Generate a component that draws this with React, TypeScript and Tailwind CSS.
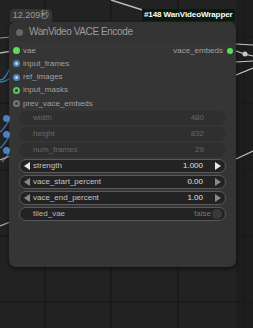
import React from 'react'

const INPUTS: { label: string; kind: 'green' | 'blueRing' | 'greenRing' | 'grayRing' }[] = [
  { label: 'vae', kind: 'green' },
  { label: 'input_frames', kind: 'blueRing' },
  { label: 'ref_images', kind: 'blueRing' },
  { label: 'input_masks', kind: 'greenRing' },
  { label: 'prev_vace_embeds', kind: 'grayRing' },
]

const DOT_CLASS: Record<string, string> = {
  green: 'bg-[#5cde5c]',
  blueRing: 'bg-[#c8d8ea] border-2 border-[#4c82c4]',
  greenRing: 'bg-[#2c3a2c] border-2 border-[#5cc75c]',
  grayRing: 'bg-[#3a3a3a] border-2 border-[#777]',
}

function Slot({ label, kind }: { label: string; kind: string }) {
  return (
    <div className="flex items-center h-[13.25px]">
      <span className={`w-[7px] h-[7px] rounded-full ml-[4px] ${DOT_CLASS[kind]}`} />
      <span className="ml-[3px] text-[8px] leading-none text-[#a0a0a0]">{label}</span>
    </div>
  )
}

function LinkedWidget({ label, value }: { label: string; value: string }) {
  return (
    <div className="relative h-[14px]">
      <span className="absolute left-[-6px] top-[3.5px] w-[7px] h-[7px] rounded-full bg-[#4a7fc0]" />
      <div className="ml-[10px] h-full rounded-full bg-[#2f2f2f] flex items-center justify-between pl-[14px] pr-[22px] text-[8px] text-[#676767]">
        <span>{label}</span>
        <span>{value}</span>
      </div>
    </div>
  )
}

function NumberWidget({ label, value, dim }: { label: string; value: string; dim?: boolean }) {
  return (
    <div className="ml-[10px] h-[14px] rounded-full bg-[#232323] border border-[#595959] flex items-center text-[8px]">
      <span className={`ml-[4px] w-0 h-0 border-y-[4px] border-y-transparent border-r-[6px] ${dim ? 'border-r-[#8a8a8a]' : 'border-r-[#e8e8e8]'}`} />
      <span className="ml-[3px] text-[#c4c4c4]">{label}</span>
      <span className="ml-auto text-[#e0e0e0]">{value}</span>
      <span className={`ml-[12px] mr-[4px] w-0 h-0 border-y-[4px] border-y-transparent border-l-[6px] ${dim ? 'border-l-[#8a8a8a]' : 'border-l-[#e8e8e8]'}`} />
    </div>
  )
}

export default function App() {
  return (
    <div className="relative w-[253px] h-[328px] overflow-hidden bg-[#222222]" style={{ fontFamily: '"Liberation Sans", Arial, sans-serif' }}>
      {/* canvas grid + wires */}
      <svg className="absolute inset-0" width="253" height="328" viewBox="0 0 253 328">
        <rect x="236" y="0" width="17" height="328" fill="#1d1d1d" />
        {[45, 111, 178, 244].map(x => <line key={x} x1={x} y1="0" x2={x} y2="328" stroke="#1a1a1a" strokeWidth="1.5" />)}
        {[37, 103, 170, 236, 302].map(y => <line key={y} x1="0" y1={y} x2="253" y2={y} stroke="#1a1a1a" strokeWidth="1.5" />)}
        <line x1="111" y1="0" x2="152" y2="13" stroke="#b8b8b8" strokeWidth="1.5" />
        <line x1="0" y1="38" x2="10" y2="37" stroke="#9a9a9a" strokeWidth="1.2" />
        <line x1="0" y1="53" x2="12" y2="51" stroke="#a9b4a9" strokeWidth="1.3" />
        <path d="M0 80 C 8 80, 8 64, 16 64" fill="none" stroke="#3f78b8" strokeWidth="1.3" />
        <path d="M0 82 C 8 82, 8 77, 16 77" fill="none" stroke="#3f78b8" strokeWidth="1.3" />
        <path d="M0 132 C 6 128, 8 118, 16 118" fill="none" stroke="#3f78b8" strokeWidth="1.3" />
        <path d="M0 148 C 6 144, 8 134, 16 134" fill="none" stroke="#3f78b8" strokeWidth="1.3" />
        <path d="M2 162 C 7 158, 9 149, 16 149" fill="none" stroke="#3f78b8" strokeWidth="1.3" />
        <line x1="0" y1="160" x2="10" y2="156" stroke="#a8b0a8" strokeWidth="1.2" />
        <line x1="0" y1="226" x2="10" y2="222" stroke="#a8b0a8" strokeWidth="1.2" />
        <line x1="236" y1="44" x2="253" y2="45" stroke="#c8c8c8" strokeWidth="1.2" />
        <path d="M230 50 C 238 50, 240 54, 253 56" fill="none" stroke="#c8c8c8" strokeWidth="1.2" />
        <circle cx="245" cy="54" r="2.5" fill="#c8c8c8" />
        <line x1="236" y1="62" x2="253" y2="61" stroke="#c8c8c8" strokeWidth="1.2" />
        <line x1="236" y1="75" x2="253" y2="68" stroke="#c8c8c8" strokeWidth="1.2" />
        <line x1="236" y1="159" x2="253" y2="151" stroke="#b8c0b8" strokeWidth="1.2" />
      </svg>

      {/* execution time badge */}
      <div className="absolute left-[10px] top-[9px] w-[42px] h-[13px] rounded-t-[4px] bg-[#353535] text-[9px] text-[#9a9a9a] flex items-center justify-center whitespace-nowrap" style={{ fontFamily: '"Liberation Sans", "Noto Sans CJK SC", sans-serif' }}>
        12.209秒
      </div>

      {/* group label */}
      <div className="absolute left-[142px] top-[9px] h-[12px] px-[2px] bg-[#0b1a10] text-white text-[8px] font-bold leading-[12px] whitespace-nowrap tracking-[-0.1px]">
        #148 WanVideoWrapper
      </div>

      {/* node */}
      <div className="absolute left-[9px] top-[22px] w-[227px] h-[245px] rounded-[7px] bg-[#353535] shadow-[0_2px_4px_rgba(0,0,0,0.5)] flex flex-col">
        <div className="h-[20px] rounded-t-[7px] bg-[#333333] flex items-center">
          <span className="ml-[7px] w-[7px] h-[7px] rounded-full bg-[#666]" />
          <span className="ml-[6px] text-[10px] text-[#9c9c9c] leading-none tracking-[-0.4px] whitespace-nowrap">WanVideo VACE Encode</span>
        </div>

        <div className="relative pt-[2px]">
          <div className="absolute right-[3px] top-[2px] h-[13.25px] flex items-center">
            <span className="text-[8px] leading-none text-[#a0a0a0]">vace_embeds</span>
            <span className="ml-[4px] w-[6px] h-[6px] rounded-full bg-[#5cde5c]" />
          </div>
          {INPUTS.map(i => <Slot key={i.label} label={i.label} kind={i.kind} />)}
        </div>

        <div className="mt-[1px] pr-[10px] flex flex-col gap-[2px]">
          <LinkedWidget label="width" value="480" />
          <LinkedWidget label="height" value="832" />
          <LinkedWidget label="num_frames" value="29" />
          <NumberWidget label="strength" value="1.000" />
          <NumberWidget label="vace_start_percent" value="0.00" dim />
          <NumberWidget label="vace_end_percent" value="1.00" dim />
          <div className="ml-[10px] h-[14px] rounded-full bg-[#232323] border border-[#595959] flex items-center text-[8px]">
            <span className="ml-[13px] text-[#b8b8b8]">tiled_vae</span>
            <span className="ml-auto text-[#777]">false</span>
            <span className="ml-[1px] mr-[3px] w-[10px] h-[10px] rounded-full bg-[#3a3a3a]" />
          </div>
        </div>
      </div>
    </div>
  )
}
